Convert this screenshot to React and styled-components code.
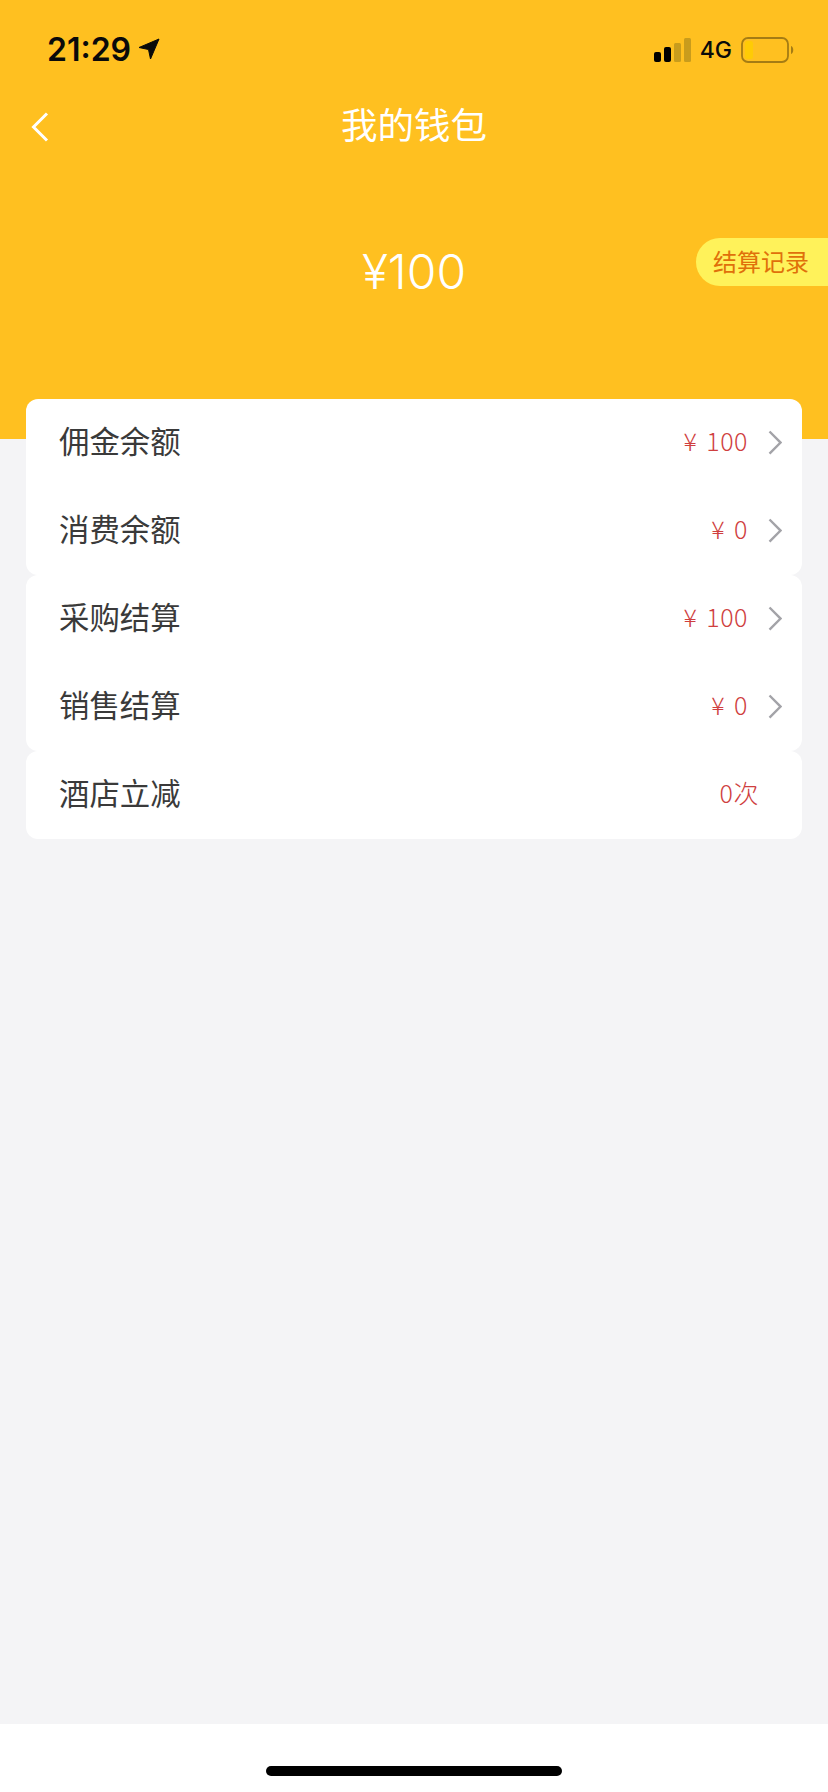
import React from 'react';
import styled, { createGlobalStyle } from 'styled-components';

const GlobalStyle = createGlobalStyle`
  html, body {
    margin: 0;
    padding: 0;
    background: #f4f4f6;
  }
  body {
    font-family: "Noto Sans CJK SC", "Liberation Sans", sans-serif;
  }
`;

const groups = [
  [
    { label: '佣金余额', value: '¥ 100', arrow: true },
    { label: '消费余额', value: '¥ 0', arrow: true },
  ],
  [
    { label: '采购结算', value: '¥ 100', arrow: true },
    { label: '销售结算', value: '¥ 0', arrow: true },
  ],
  [{ label: '酒店立减', value: '0次', arrow: false }],
];

const Chevron = ({ size = 22, color = '#a3a3a8', width = 2.4 }) => (
  <svg width={size * 0.64} height={size * 1.14} viewBox="0 0 14 25" fill="none">
    <path d="M1.5 1.5 L12.5 12.5 L1.5 23.5" stroke={color} strokeWidth={width} />
  </svg>
);

const BackIcon = () => (
  <svg width="18" height="30" viewBox="0 0 18 30" fill="none">
    <path d="M16 1.5 L2.5 15 L16 28.5" stroke="#fff" strokeWidth="3" />
  </svg>
);

const LocationIcon = () => (
  <svg width="22" height="22" viewBox="0 0 22 22">
    <path d="M21 1 L1 9.5 L10.5 11.5 L12.5 21 Z" fill="#0a0a0a" stroke="#0a0a0a" strokeLinejoin="round" />
  </svg>
);

const SignalIcon = () => (
  <svg width="37" height="24" viewBox="0 0 37 24">
    <rect x="0" y="14" width="7" height="10" rx="2" fill="#000" />
    <rect x="10" y="9" width="7" height="15" rx="2" fill="#000" />
    <rect x="20" y="5" width="7" height="19" rx="1.5" fill="#c99c1c" />
    <rect x="30" y="0" width="7" height="24" rx="1.5" fill="#c99c1c" />
  </svg>
);

const BatteryIcon = () => (
  <svg width="54" height="26" viewBox="0 0 54 26">
    <rect x="1" y="1" width="46" height="24" rx="6" fill="none" stroke="#a57c14" strokeWidth="1.8" />
    <rect x="4" y="4" width="8" height="18" rx="2.5" fill="#ffcb05" />
    <path d="M50 9 C53 10 53 16 50 17 Z" fill="#a57c14" />
  </svg>
);

const App = () => (
  <>
    <GlobalStyle />
    <Page>
      <Header>
        <StatusBar>
          <TimeBox>
            <Time>21:29</Time>
            <LocationIcon />
          </TimeBox>
          <StatusRight>
            <SignalIcon />
            <Network>4G</Network>
            <BatteryIcon />
          </StatusRight>
        </StatusBar>
        <NavBar>
          <BackButton>
            <BackIcon />
          </BackButton>
          <Title>我的钱包</Title>
        </NavBar>
        <Balance>¥100</Balance>
        <RecordBadge>结算记录</RecordBadge>
      </Header>
      <Content>
        {groups.map((rows, i) => (
          <Card key={i}>
            {rows.map((row) => (
              <Row key={row.label}>
                <Label>{row.label}</Label>
                <Value $arrow={row.arrow}>{row.value}</Value>
                {row.arrow && (
                  <ArrowBox>
                    <Chevron />
                  </ArrowBox>
                )}
              </Row>
            ))}
          </Card>
        ))}
      </Content>
      <HomeArea>
        <HomeBar />
      </HomeArea>
    </Page>
  </>
);

const Page = styled.div`
  display: flex;
  flex-direction: column;
  width: 828px;
  height: 1792px;
  background: #f4f4f6;
  overflow: hidden;
`;

const Header = styled.header`
  position: relative;
  height: 439px;
  flex-shrink: 0;
  background: #ffc020;
`;

const StatusBar = styled.div`
  display: flex;
  align-items: center;
  justify-content: space-between;
  height: 50px;
  padding: 24px 33px 0 47px;
`;

const TimeBox = styled.div`
  display: flex;
  align-items: center;
  gap: 7px;
`;

const Time = styled.span`
  font-family: Inter, "Liberation Sans", sans-serif;
  font-size: 32px;
  font-weight: 600;
  color: #0a0a0a;
`;

const StatusRight = styled.div`
  display: flex;
  align-items: center;
  gap: 9px;
  margin-top: 2px;
`;

const Network = styled.span`
  font-family: Inter, "Liberation Sans", sans-serif;
  font-size: 23px;
  font-weight: 500;
  color: #0a0a0a;
`;

const NavBar = styled.div`
  position: relative;
  display: flex;
  align-items: center;
  justify-content: center;
  height: 74px;
  margin-top: 15px;
`;

const BackButton = styled.div`
  position: absolute;
  left: 31px;
  top: 23px;
  display: flex;
`;

const Title = styled.h1`
  margin: 0 0 5px;
  font-size: 36.5px;
  font-weight: 400;
  line-height: 52px;
  color: #fff;
`;

const Balance = styled.div`
  margin-top: 81px;
  text-align: center;
  font-family: Inter, "Liberation Sans", sans-serif;
  font-size: 48px;
  font-weight: 300;
  line-height: 56px;
  color: #fff;
`;

const RecordBadge = styled.div`
  position: absolute;
  right: 0;
  top: 238px;
  display: flex;
  align-items: center;
  width: 132px;
  height: 48px;
  padding: 0 0 4px 17px;
  box-sizing: border-box;
  border-radius: 24px 0 0 24px;
  background: #fff25a;
  font-size: 24px;
  font-weight: 400;
  color: #e0700a;
`;

const Content = styled.main`
  display: flex;
  flex: 1;
  flex-direction: column;
  margin-top: -40px;
  padding: 0 26px;
  position: relative;
`;

const Card = styled.section`
  border-radius: 12px;
  background: #fff;
`;

const Row = styled.div`
  display: flex;
  align-items: center;
  height: 88px;
  padding: 0 20px 0 33px;
`;

const Label = styled.span`
  flex: 1;
  margin-bottom: 6px;
  font-size: 30.4px;
  font-weight: 400;
  color: #3a3a3a;
`;

const Value = styled.span`
  margin-right: ${(p) => (p.$arrow ? '0' : '23px')};
  margin-bottom: 6px;
  font-size: 25px;
  font-weight: 300;
  letter-spacing: 0.5px;
  word-spacing: 3px;
  color: #cf3f3f;
`;

const ArrowBox = styled.span`
  display: flex;
  margin-left: 20px;
`;

const HomeArea = styled.footer`
  display: flex;
  justify-content: center;
  flex-shrink: 0;
  height: 68px;
  padding-top: 42px;
  box-sizing: border-box;
  background: #fff;
`;

const HomeBar = styled.div`
  width: 296px;
  height: 10px;
  border-radius: 5px;
  background: #000;
`;

export default App;
